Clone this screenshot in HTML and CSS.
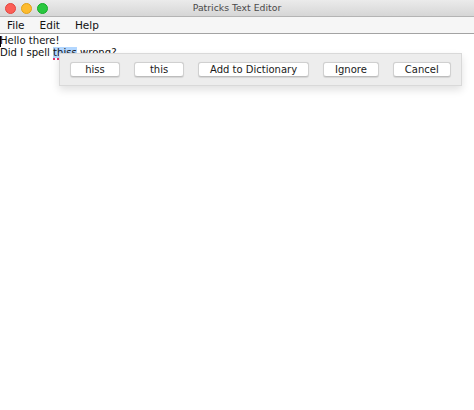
FILE: index.html
```html
<!DOCTYPE html>
<html>
<head>
<meta charset="utf-8">
<link rel="stylesheet" href="styles.css">
</head>
<body>
<div class="window">
  <div class="titlebar">
    <div class="lights">
      <span class="light red"></span>
      <span class="light yellow"></span>
      <span class="light green"></span>
    </div>
    <div class="title">Patricks Text Editor</div>
  </div>
  <div class="menubar">
    <span class="menu">File</span>
    <span class="menu">Edit</span>
    <span class="menu">Help</span>
  </div>
  <div class="editor">
    <div class="line"><span class="caret"></span>Hello there!</div>
    <div class="line">Did I spell <span class="sel"><span class="misspelt">thiss</span></span> wrong?</div>
    <div class="popup">
      <button class="btn">hiss</button>
      <button class="btn">this</button>
      <button class="btn">Add to Dictionary</button>
      <button class="btn">Ignore</button>
      <button class="btn">Cancel</button>
    </div>
  </div>
</div>
</body>
</html>
```

FILE: styles.css
```css
html, body {
  margin: 0;
  padding: 0;
  background: #ffffff;
}
body {
  font-family: "DejaVu Sans", Verdana, sans-serif;
  color: #111111;
}
.window {
  width: 474px;
  height: 410px;
  display: flex;
  flex-direction: column;
  overflow: hidden;
}
.titlebar {
  height: 16px;
  flex: none;
  position: relative;
  display: flex;
  align-items: center;
  justify-content: center;
  background: linear-gradient(#ebebeb, #d6d6d6);
  border-bottom: 1px solid #b4b4b4;
}
.lights {
  position: absolute;
  left: 5px;
  top: 3px;
  display: flex;
  gap: 5px;
}
.light {
  width: 11px;
  height: 11px;
  border-radius: 50%;
  box-sizing: border-box;
}
.red { background: #fc5f57; border: 0.5px solid #e2463f; }
.yellow { background: #fdbb2e; border: 0.5px solid #e1a116; }
.green { background: #29c73f; border: 0.5px solid #12ac28; }
.title {
  font-size: 9.3px;
  color: #4a4a4a;
  line-height: 16px;
}
.menubar {
  height: 16px;
  flex: none;
  display: flex;
  align-items: center;
  padding-left: 7px;
  gap: 15px;
  background: #f6f6f6;
  border-bottom: 1px solid #a3a3a3;
  font-size: 10.5px;
  color: #111;
}
.editor {
  flex: 1;
  position: relative;
  background: #fff;
  font-size: 10.1px;
  line-height: 12px;
  padding-top: 1px;
}
.line {
  white-space: pre;
  position: relative;
}
.caret {
  position: absolute;
  left: 0;
  top: 1px;
  width: 1px;
  height: 11px;
  background: #000;
}
.sel {
  background: #b3d7ff;
}
.misspelt {
  text-decoration: underline dotted #e0306a;
  text-decoration-thickness: 2px;
  text-underline-offset: 2px;
}
.popup {
  position: absolute;
  left: 59px;
  top: 19px;
  display: flex;
  gap: 14px;
  padding: 8px 10px 8px 10px;
  background: #ededed;
  border: 1px solid #d9d9d9;
  box-shadow: 0 4px 8px rgba(0,0,0,0.12);
}
.btn {
  font-family: "DejaVu Sans", Verdana, sans-serif;
  font-size: 10px;
  color: #1a1a1a;
  height: 15px;
  min-width: 50px;
  padding: 0 11px;
  margin: 0;
  line-height: 13px;
  background: #ffffff;
  border: 1px solid #d0d0d0;
  border-bottom-color: #bdbdbd;
  border-radius: 3px;
  box-shadow: 0 0.5px 1px rgba(0,0,0,0.1);
}
```
